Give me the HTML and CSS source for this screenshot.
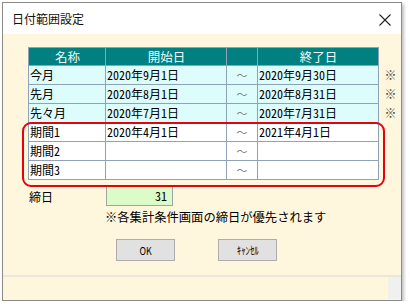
FILE: index.html
```html
<!DOCTYPE html>
<html lang="ja">
<head>
<meta charset="utf-8">
<link rel="stylesheet" href="styles.css">
</head>
<body>
<div class="window">
  <div class="titlebar">
    <span class="title">日付範囲設定</span>
    <svg class="close" width="12" height="12" viewBox="0 0 12 12"><path d="M0.5 0.5 L11.5 11.5 M11.5 0.5 L0.5 11.5" stroke="#222" stroke-width="1.1" fill="none"/></svg>
  </div>
  <div class="content">
    <div class="tablewrap">
      <table class="grid">
        <colgroup>
          <col class="c-name"><col class="c-date"><col class="c-tilde"><col class="c-date"><col class="c-mark">
        </colgroup>
        <thead>
          <tr><th>名称</th><th>開始日</th><th></th><th>終了日</th><th class="mark"></th></tr>
        </thead>
        <tbody>
          <tr class="fixed"><td>今月</td><td>2020年9月1日</td><td class="tilde">～</td><td>2020年9月30日</td><td class="mark">※</td></tr>
          <tr class="fixed"><td>先月</td><td>2020年8月1日</td><td class="tilde">～</td><td>2020年8月31日</td><td class="mark">※</td></tr>
          <tr class="fixed"><td>先々月</td><td>2020年7月1日</td><td class="tilde">～</td><td>2020年7月31日</td><td class="mark">※</td></tr>
          <tr class="period"><td>期間1</td><td>2020年4月1日</td><td class="tilde">～</td><td>2021年4月1日</td><td class="mark"></td></tr>
          <tr class="period"><td>期間2</td><td></td><td class="tilde">～</td><td></td><td class="mark"></td></tr>
          <tr class="period"><td>期間3</td><td></td><td class="tilde">～</td><td></td><td class="mark"></td></tr>
        </tbody>
      </table>
      <div class="highlight"></div>
    </div>
    <div class="closing">
      <span class="closing-label">締日</span>
      <div class="closing-input">31</div>
    </div>
    <div class="note">※各集計条件画面の締日が優先されます</div>
    <div class="buttons">
      <button class="btn"><span class="btn-text">OK</span></button>
      <button class="btn"><span class="btn-text">ｷｬﾝｾﾙ</span></button>
    </div>
  </div>
  <div class="statusbar">
    <div class="status-main"></div>
    <div class="status-grip"></div>
  </div>
</div>
</body>
</html>
```
FILE: styles.css
```css
html, body {
  margin: 0;
  padding: 0;
  background: #ffffff;
}
body {
  font-family: "Noto Sans CJK JP", "Noto Sans", sans-serif;
  font-size: 12px;
  color: #000;
}
.window {
  box-sizing: border-box;
  margin: 2px 0 0 2px;
  width: 400px;
  height: 299px;
  border: 1px solid #8a8a8a;
  background: #fff7dd;
  box-shadow: 2px 2px 3px rgba(0,0,0,0.25);
  display: flex;
  flex-direction: column;
}
.titlebar {
  height: 31px;
  background: #ffffff;
  display: flex;
  align-items: center;
  justify-content: space-between;
  padding: 0 9px 0 9px;
  flex-shrink: 0;
}
.title {
  font-size: 12px;
  color: #111;
}
.close {
  margin-right: 1px;
  margin-top: 2px;
}
.content {
  flex: 1;
  padding: 13px 0 0 25px;
}
.tablewrap {
  position: relative;
  width: 372px;
}
.grid {
  border-collapse: collapse;
  table-layout: fixed;
  width: 372px;
  font-feature-settings: "hwid";
}
.c-name { width: 77px; }
.c-date { width: 121px; }
.c-tilde { width: 31px; }
.c-mark { width: 22px; }
.grid th, .grid td {
  border: 1px solid #8ea3b8;
  height: 18px;
  padding: 0 0 0 1px;
  line-height: 18px;
  white-space: nowrap;
  overflow: hidden;
  font-weight: normal;
  text-align: left;
}
.grid th {
  background: #008080;
  color: #f0fbfb;
  text-align: center;
  height: 17px;
  line-height: 17px;
  font-size: 12.5px;
}
.grid tr.fixed td { background: #ddfcfc; }
.grid tr.period td { background: #ffffff; }
.grid td.tilde {
  text-align: center;
  color: #808080;
  padding: 0;
  font-feature-settings: normal;
  font-size: 11px;
}
.grid th.mark, .grid td.mark,
.grid tr.fixed td.mark, .grid tr.period td.mark {
  border: none;
  background: transparent;
  text-align: center;
  padding: 0 0 0 2px;
  color: #444;
}
.highlight {
  position: absolute;
  left: -6px;
  top: 75px;
  width: 359px;
  height: 61px;
  border: 2px solid #e8000b;
  border-radius: 9px;
  pointer-events: none;
}
.closing {
  display: flex;
  align-items: center;
  margin-top: 6px;
  height: 20px;
}
.closing-label {
  width: 77px;
  padding-left: 1px;
}
.closing-input {
  box-sizing: border-box;
  width: 67px;
  height: 20px;
  background: #dbfcc8;
  border: 1px solid #9aa8a0;
  text-align: right;
  padding-right: 5px;
  line-height: 18px;
  font-feature-settings: "hwid";
}
.note {
  margin: 3px 0 0 77px;
  line-height: 17px;
  font-size: 12.3px;
}
.buttons {
  display: flex;
  gap: 43px;
  margin: 13px 0 0 88px;
}
.btn {
  box-sizing: border-box;
  width: 59px;
  height: 22px;
  background: #e1e1e1;
  border: 1px solid #adadad;
  font-family: "Noto Sans CJK JP", sans-serif;
  font-size: 11px;
  padding: 0;
  color: #000;
  display: flex;
  align-items: center;
  justify-content: center;
}
.btn-text {
  display: inline-block;
  transform: scaleX(0.8);
}
.statusbar {
  height: 22px;
  border-top: 2px solid #ebe6d8;
  display: flex;
  flex-shrink: 0;
  margin-bottom: 1px;
}
.status-main {
  flex: 1;
  background: #fff7dd;
}
.status-grip {
  width: 13px;
  background: #f0f0f0;
}
```
